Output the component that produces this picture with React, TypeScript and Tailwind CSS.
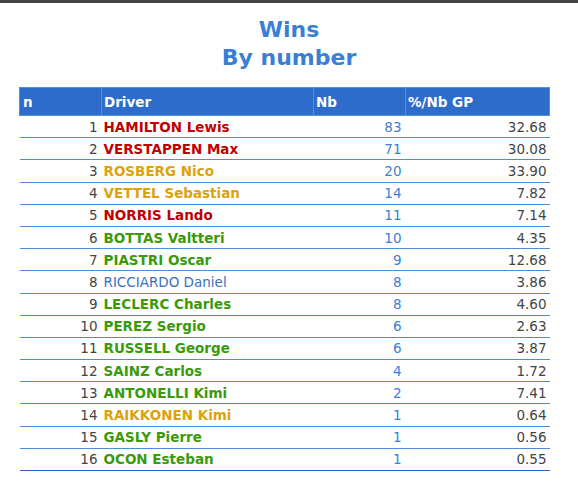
const rows: [number, string, string, number, string][] = [
  [1, "HAMILTON Lewis", "red", 83, "32.68"],
  [2, "VERSTAPPEN Max", "red", 71, "30.08"],
  [3, "ROSBERG Nico", "gold", 20, "33.90"],
  [4, "VETTEL Sebastian", "gold", 14, "7.82"],
  [5, "NORRIS Lando", "red", 11, "7.14"],
  [6, "BOTTAS Valtteri", "green", 10, "4.35"],
  [7, "PIASTRI Oscar", "green", 9, "12.68"],
  [8, "RICCIARDO Daniel", "blue", 8, "3.86"],
  [9, "LECLERC Charles", "green", 8, "4.60"],
  [10, "PEREZ Sergio", "green", 6, "2.63"],
  [11, "RUSSELL George", "green", 6, "3.87"],
  [12, "SAINZ Carlos", "green", 4, "1.72"],
  [13, "ANTONELLI Kimi", "green", 2, "7.41"],
  [14, "RAIKKONEN Kimi", "gold", 1, "0.64"],
  [15, "GASLY Pierre", "green", 1, "0.56"],
  [16, "OCON Esteban", "green", 1, "0.55"],
];

const driverClass: Record<string, string> = {
  red: "font-bold text-[#c00000]",
  gold: "font-bold text-[#dda20a]",
  green: "font-bold text-[#3a9a0a]",
  blue: "font-normal text-[#3a6fc4]",
};

export default function App() {
  return (
    <div className="min-h-[485px] bg-white border-t-[3px] border-[#444444] font-['Tahoma','DejaVu_Sans',sans-serif]">
      <h1 className="pt-[13px] text-center text-[22px] leading-[28px] font-bold text-[#3a7fd6]">
        Wins
        <br />
        By number
      </h1>
      <table className="mt-[15px] ml-[19px] w-[531px] border-collapse text-[13.5px] leading-[16px]">
        <thead>
          <tr className="h-[28px] bg-[#2e6ccc] text-white font-bold text-left">
            <th className="w-[82px] border border-[#4d92dc] px-[3px]">n</th>
            <th className="w-[212px] border border-[#4d92dc] px-[2px]">Driver</th>
            <th className="w-[92px] border border-[#4d92dc] px-[2px]">Nb</th>
            <th className="border border-[#4d92dc] px-[2px]">%/Nb GP</th>
          </tr>
        </thead>
        <tbody>
          {rows.map(([n, name, c, nb, pct], i) => (
            <tr
              key={n}
              className={`h-[22.2px] border-b ${i === rows.length - 1 ? "border-[#2a68c8]" : "border-[#4a8fd8]"}`}
            >
              <td className="text-right pr-[4px] text-[#444]">{n}</td>
              <td className={`pl-[2px] ${driverClass[c]}`}>{name}</td>
              <td className="text-right pr-[4px] text-[#3a7fd6]">{nb}</td>
              <td className="text-right pr-[3px] text-[#444]">{pct}</td>
            </tr>
          ))}
        </tbody>
      </table>
    </div>
  );
}
